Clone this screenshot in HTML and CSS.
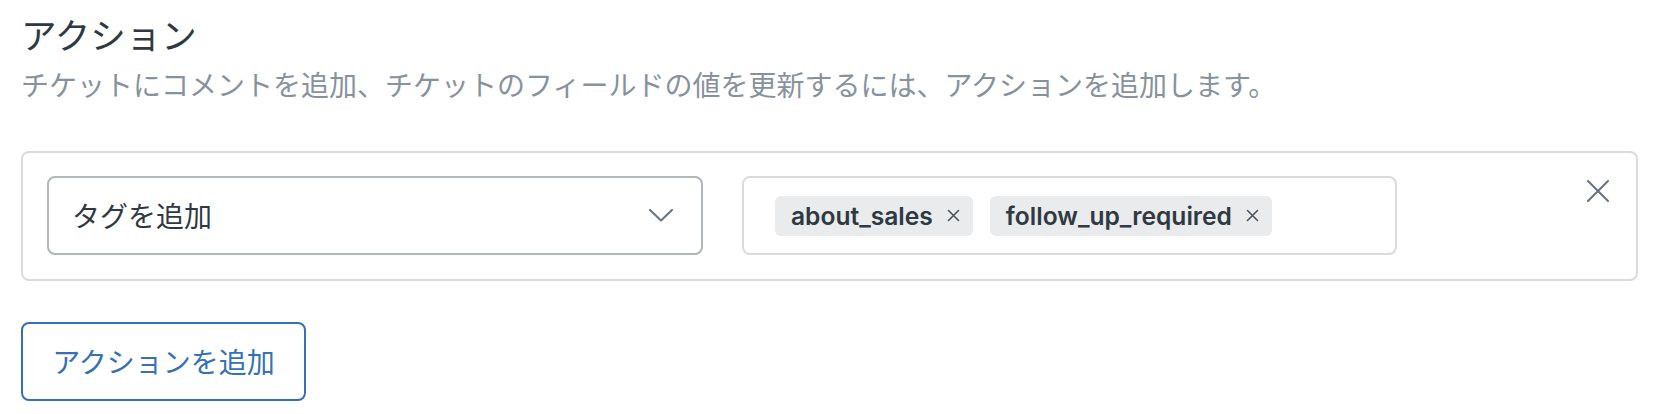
FILE: index.html
```html
<!DOCTYPE html>
<html lang="ja">
<head>
<meta charset="utf-8">
<title>アクション</title>
<link rel="stylesheet" href="styles.css">
</head>
<body>
<section class="actions">
  <h1 class="actions-title">アクション</h1>
  <p class="actions-hint">チケットにコメントを追加、チケットのフィールドの値を更新するには、アクションを追加します。</p>

  <div class="action-card">
    <div class="select">
      <span class="select-value">タグを追加</span>
      <svg class="chevron" width="24" height="13" viewBox="0 0 24 13" aria-hidden="true">
        <path d="M1 1 L12 11.5 L23 1" fill="none" stroke="#68737d" stroke-width="2" stroke-linecap="round" stroke-linejoin="round"/>
      </svg>
    </div>

    <div class="tag-input">
      <span class="tag">about_sales
        <svg class="tag-x" width="13" height="13" viewBox="0 0 13 13" aria-hidden="true">
          <path d="M1.5 1.5 L11.5 11.5 M11.5 1.5 L1.5 11.5" fill="none" stroke="#49545c" stroke-width="1.6" stroke-linecap="round"/>
        </svg>
      </span>
      <span class="tag">follow_up_required
        <svg class="tag-x" width="13" height="13" viewBox="0 0 13 13" aria-hidden="true">
          <path d="M1.5 1.5 L11.5 11.5 M11.5 1.5 L1.5 11.5" fill="none" stroke="#49545c" stroke-width="1.6" stroke-linecap="round"/>
        </svg>
      </span>
    </div>

    <button class="remove" type="button" aria-label="削除">
      <svg width="22" height="22" viewBox="0 0 22 22" aria-hidden="true">
        <path d="M1 1 L21 21 M21 1 L1 21" fill="none" stroke="#68737d" stroke-width="2" stroke-linecap="round"/>
      </svg>
    </button>
  </div>

  <button class="add-action" type="button">アクションを追加</button>
</section>
</body>
</html>
```

FILE: styles.css
```css
* {
  box-sizing: border-box;
}

html, body {
  margin: 0;
  background: #ffffff;
}

body {
  font-family: "Noto Sans CJK JP", "Noto Sans", sans-serif;
  color: #2f3941;
}

.actions {
  padding: 10px 18px 0 21px;
}

.actions-title {
  margin: 0;
  font-size: 35.5px;
  line-height: 47px;
  font-weight: 400;
  color: #2f3941;
}

.actions-hint {
  margin: 8px 0 0;
  font-size: 28px;
  line-height: 39px;
  color: #87929d;
}

.action-card {
  margin-top: 47px;
  width: 1617px;
  height: 130px;
  border: 2px solid #d8dcde;
  border-radius: 8px;
  padding: 23px 24px;
  display: flex;
  align-items: flex-start;
}

.select {
  flex: 0 0 656px;
  height: 79px;
  border: 2px solid #b0b6bb;
  border-radius: 8px;
  padding: 0 28px 0 23px;
  display: flex;
  align-items: center;
  justify-content: space-between;
}

.select-value {
  font-size: 28px;
  line-height: 39px;
  color: #2f3941;
}

.chevron {
  display: block;
}

.tag-input {
  flex: 0 0 655px;
  margin-left: 39px;
  height: 79px;
  border: 2px solid #d8dcde;
  border-radius: 8px;
  padding: 0 31px;
  display: flex;
  align-items: center;
  gap: 17px;
}

.tag {
  display: inline-flex;
  align-items: center;
  gap: 14px;
  height: 40px;
  padding: 0 13px 0 16px;
  background: #e9ebed;
  border-radius: 6px;
  font-family: Inter, "Liberation Sans", sans-serif;
  font-weight: 600;
  font-size: 24.6px;
  color: #2f3941;
}

.tag-x {
  display: block;
}

.remove {
  margin-left: auto;
  margin-top: 3px;
  margin-right: 2px;
  width: 24px;
  height: 24px;
  padding: 0;
  border: 0;
  background: transparent;
  display: flex;
  align-items: center;
  justify-content: center;
}

.add-action {
  margin-top: 41px;
  width: 285px;
  height: 79px;
  border: 2px solid #3571b3;
  border-radius: 8px;
  background: #ffffff;
  color: #3571b3;
  font-family: "Noto Sans CJK JP", "Noto Sans", sans-serif;
  font-size: 28px;
  line-height: 39px;
  padding: 0;
}
```
